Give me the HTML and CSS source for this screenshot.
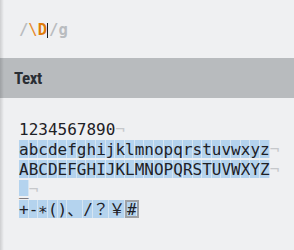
FILE: index.html
```html
<!DOCTYPE html>
<html lang="en">
<head>
<meta charset="UTF-8">
<meta name="viewport" content="width=device-width, initial-scale=1.0">
<title>Text</title>
<link rel="stylesheet" href="styles.css">
</head>
<body>
  <div class="app">
    <!-- regex input -->
    <div class="regex"><span class="delim">/</span><span class="esc">\</span><span class="esc cls">D</span><span class="caret"></span><span class="delim">/</span><span class="flag">g</span></div>

    <div class="section-head">Text</div>

    <div class="editor">
      <div class="line">1234567890<span class="eol">¬</span></div>
      <div class="line"><span class="sel">a</span><span class="sel">b</span><span class="sel">c</span><span class="sel">d</span><span class="sel">e</span><span class="sel">f</span><span class="sel">g</span><span class="sel">h</span><span class="sel">i</span><span class="sel">j</span><span class="sel">k</span><span class="sel">l</span><span class="sel">m</span><span class="sel">n</span><span class="sel">o</span><span class="sel">p</span><span class="sel">q</span><span class="sel">r</span><span class="sel">s</span><span class="sel">t</span><span class="sel">u</span><span class="sel">v</span><span class="sel">w</span><span class="sel">x</span><span class="sel">y</span><span class="sel">z</span><span class="eol">¬</span></div>
      <div class="line"><span class="sel">A</span><span class="sel">B</span><span class="sel">C</span><span class="sel">D</span><span class="sel">E</span><span class="sel">F</span><span class="sel">G</span><span class="sel">H</span><span class="sel">I</span><span class="sel">J</span><span class="sel">K</span><span class="sel">L</span><span class="sel">M</span><span class="sel">N</span><span class="sel">O</span><span class="sel">P</span><span class="sel">Q</span><span class="sel">R</span><span class="sel">S</span><span class="sel">T</span><span class="sel">U</span><span class="sel">V</span><span class="sel">W</span><span class="sel">X</span><span class="sel">Y</span><span class="sel">Z</span><span class="eol">¬</span></div>
      <div class="line"><span class="sel under">_</span><span class="eol">¬</span></div>
      <div class="line"><span class="sel">+</span><span class="sel">-</span><span class="sel">∗</span><span class="sel">(</span><span class="sel">)</span><span class="sel">、</span><span class="sel">/</span><span class="sel">？</span><span class="sel">￥</span><span class="sel cursor">#</span></div>
    </div>
  </div>
</body>
</html>
```

FILE: styles.css
```css
body {
  margin: 0;
  padding: 0;
  font-family: 'DejaVu Sans', sans-serif;
}

.app {
  position: relative;
  height: 250px;
  overflow: hidden;
  background: #eff0f2;
}

/* soft shadow along the left edge */
.app::before {
  content: "";
  position: absolute;
  top: 0;
  bottom: 0;
  left: 0;
  width: 4px;
  background: linear-gradient(90deg, rgba(0, 0, 0, 0.14), rgba(0, 0, 0, 0));
  pointer-events: none;
}

.regex {
  height: 58px;
  box-sizing: border-box;
  padding: 22px 19px 0;
  font: bold 15.5px/16px 'DejaVu Sans Mono', monospace;
  color: #b9bcc0;
  white-space: pre;
}

.regex .esc {
  color: #e68a2e;
  font-weight: normal;
}

.regex .cls {
  color: #e07c0a;
  font-weight: bold;
}

.caret {
  display: inline-block;
  width: 1px;
  height: 15px;
  margin-right: 1px;
  background: #1d1f22;
  vertical-align: -3px;
}

.section-head {
  height: 40px;
  padding-left: 14px;
  background: #b8bbbe;
  color: #2a2e34;
  font: bold 17px/40px 'Roboto Condensed', 'Liberation Sans Narrow', Roboto, sans-serif;
  letter-spacing: -0.4px;
}

.editor {
  padding: 22px 0 0 19px;
  font: 16px/20px 'DejaVu Sans Mono', 'Noto Sans CJK JP', monospace;
  color: #1e2126;
}

.line {
  height: 20px;
  white-space: pre;
}

.sel {
  display: inline-block;
  height: 18px;
  vertical-align: top;
  background: #b4d3ee;
  box-shadow: inset -1px 0 #d6e5f2;
}

/* the underscore glyph hangs just below its selection box */
.sel.under {
  height: 16px;
}

.sel.cursor {
  box-sizing: border-box;
  border: 2px solid #9ea1a5;
  line-height: 16px;
}

.eol {
  color: #c6c8cb;
}
```
